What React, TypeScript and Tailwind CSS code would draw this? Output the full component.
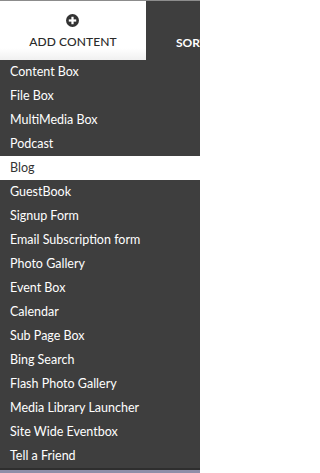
import React from "react";

const items = [
  "Content Box",
  "File Box",
  "MultiMedia Box",
  "Podcast",
  "Blog",
  "GuestBook",
  "Signup Form",
  "Email Subscription form",
  "Photo Gallery",
  "Event Box",
  "Calendar",
  "Sub Page Box",
  "Bing Search",
  "Flash Photo Gallery",
  "Media Library Launcher",
  "Site Wide Eventbox",
  "Tell a Friend",
];

export default function App() {
  return (
    <div
      className="w-[200px] h-[473px] overflow-hidden bg-[#3e3e3e] flex flex-col"
      style={{ fontFamily: "Lato, 'Noto Sans', sans-serif" }}
    >
      <div className="h-px bg-[#8c8c8c]" />
      <div className="flex h-[59px]">
        <div className="w-[146px] shrink-0 bg-gradient-to-b from-white from-80% to-[#f0f0f0] flex flex-col items-center pt-[13px]">
          <svg width="13" height="13" viewBox="0 0 14 14" className="ml-[-2px]">
            <circle cx="7" cy="7" r="7" fill="#333333" />
            <rect x="5.8" y="3" width="2.4" height="8" fill="#ffffff" />
            <rect x="3" y="5.8" width="8" height="2.4" fill="#ffffff" />
          </svg>
          <div className="mt-[9px] text-[12px] font-medium text-[#2a2a2a] tracking-[0.1px] leading-none">
            ADD CONTENT
          </div>
        </div>
        <div className="flex-1 overflow-hidden bg-[#3e3e3e] pl-[30px] pt-[36px]">
          <div className="text-[12px] font-bold text-white whitespace-nowrap leading-none">
            SORT
          </div>
        </div>
      </div>
      <ul className="flex flex-col">
        {items.map((it) => (
          <li
            key={it}
            className={
              it === "Blog"
                ? "h-[24px] flex items-center pl-[10px] text-[12.5px] bg-white text-[#333333] whitespace-nowrap"
                : "h-[24px] flex items-center pl-[10px] text-[12.5px] text-white whitespace-nowrap"
            }
          >
            {it}
          </li>
        ))}
      </ul>
      <div className="h-[2px] bg-[#2e2e2e]" />
      <div className="flex-1 bg-[#8e8ea8]" />
    </div>
  );
}
